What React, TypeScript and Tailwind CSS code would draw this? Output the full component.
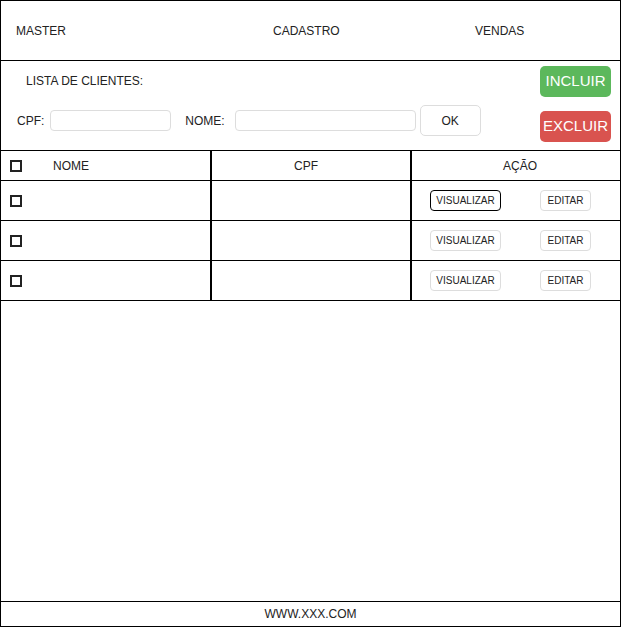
const rows = [{ active: true }, { active: false }, { active: false }];

function Check() {
  return <span className="block h-[12px] w-[12px] border-2 border-[#222] bg-white" />;
}

export default function App() {
  return (
    <div
      className="flex h-[627px] w-[621px] flex-col border border-black bg-white text-[12px] text-[#222]"
      style={{ fontFamily: '"Liberation Sans", Arial, sans-serif' }}
    >
      {/* Top menu */}
      <div className="flex h-[60px] shrink-0 items-center border-b border-black pl-[15px]">
        <span className="w-[257px]">MASTER</span>
        <span className="w-[202px]">CADASTRO</span>
        <span>VENDAS</span>
      </div>

      {/* Filters */}
      <div className="flex h-[90px] shrink-0 border-b border-black">
        <div className="flex flex-1 flex-col">
          <div className="mt-[13px] pl-[25px] leading-[14px]">LISTA DE CLIENTES:</div>
          <div className="mt-[17px] flex items-center pl-[16px]">
            <span>CPF:</span>
            <input className="ml-[6px] h-[21px] w-[121px] rounded-[4px] border border-[#ddd] outline-none" />
            <span className="ml-[14px]">NOME:</span>
            <input className="ml-[10px] h-[21px] w-[181px] rounded-[4px] border border-[#ddd] outline-none" />
            <button className="ml-[4px] h-[31px] w-[61px] rounded-[5px] border border-[#ddd] bg-white">OK</button>
          </div>
        </div>
        <div className="flex w-[80px] flex-col gap-[14px] pt-[5px] pr-[9px]">
          <button className="h-[31px] w-[71px] rounded-[5px] bg-[#5cb85c] text-[15px] text-white">INCLUIR</button>
          <button className="h-[31px] w-[71px] rounded-[5px] bg-[#d9534f] text-[15px] text-white">EXCLUIR</button>
        </div>
      </div>

      {/* Table */}
      <div className="flex h-[30px] shrink-0 border-b border-black">
        <div className="flex w-[209px] items-center pl-[9px]">
          <Check />
          <span className="ml-[31px]">NOME</span>
        </div>
        <div className="flex w-[200px] items-center justify-center border-l-2 border-black pr-[10px]">CPF</div>
        <div className="flex flex-1 items-center justify-center border-l-2 border-black pl-[8px]">AÇÃO</div>
      </div>
      {rows.map((r, i) => (
        <div key={i} className="flex h-[40px] shrink-0 border-b border-black">
          <div className="flex w-[209px] items-center pl-[9px]">
            <Check />
          </div>
          <div className="w-[200px] border-l-2 border-black" />
          <div className="flex flex-1 items-center border-l-2 border-black pl-[18px]">
            <button
              className={`h-[21px] w-[71px] rounded-[4px] border bg-white text-[10px] ${
                r.active ? "border-black" : "border-[#ddd]"
              }`}
            >
              VISUALIZAR
            </button>
            <button className="ml-[39px] h-[21px] w-[51px] rounded-[4px] border border-[#ddd] bg-white text-[10px]">
              EDITAR
            </button>
          </div>
        </div>
      ))}

      <div className="flex-1" />

      {/* Footer */}
      <div className="flex h-[25px] shrink-0 items-center justify-center border-t border-black">WWW.XXX.COM</div>
    </div>
  );
}
